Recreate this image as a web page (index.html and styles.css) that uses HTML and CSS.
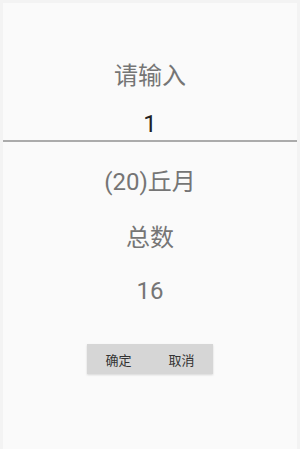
FILE: index.html
```html
<!DOCTYPE html>
<html lang="zh-CN">
<head>
    <meta charset="UTF-8">
    <meta name="viewport" content="width=device-width, initial-scale=1.0">
    <title>总数</title>
    <link rel="stylesheet" href="styles.css">
</head>
<body>
    <div class="screen">
        <div class="label title">请输入</div>
        <div class="input-line">1</div>
        <div class="label month">(20)丘月</div>
        <div class="label total-title">总数</div>
        <div class="label total-value">16</div>
        <div class="buttons">
            <button class="btn">确定</button>
            <button class="btn">取消</button>
        </div>
    </div>
</body>
</html>
```

FILE: styles.css
```css
body {
    margin: 0;
    padding: 0;
    background-color: #f3f3f3;
    font-family: Roboto, "Noto Sans CJK SC", sans-serif;
}

.screen {
    margin: 3px 3px 0 3px;
    height: 446px;
    background-color: #fafafa;
    display: flex;
    flex-direction: column;
    align-items: center;
}

.label {
    font-size: 24px;
    line-height: 32px;
    color: #757575;
    text-align: center;
}

.title {
    margin-top: 57px;
}

.input-line {
    align-self: stretch;
    padding-top: 16px;
    font-size: 24px;
    line-height: 32px;
    color: #222;
    text-align: center;
    border-bottom: 2px solid #ababab;
}

.month {
    margin-top: 24px;
}

.total-title {
    margin-top: 24px;
}

.total-value {
    margin-top: 21px;
}

.buttons {
    margin-top: 37px;
    display: flex;
    background-color: #d6d6d6;
    box-shadow: 0 1px 2px rgba(0, 0, 0, 0.15);
}

.btn {
    width: 63px;
    height: 30px;
    padding: 0;
    border: none;
    background: transparent;
    font-family: Roboto, "Noto Sans CJK SC", sans-serif;
    font-size: 13px;
    color: #333;
}
```
